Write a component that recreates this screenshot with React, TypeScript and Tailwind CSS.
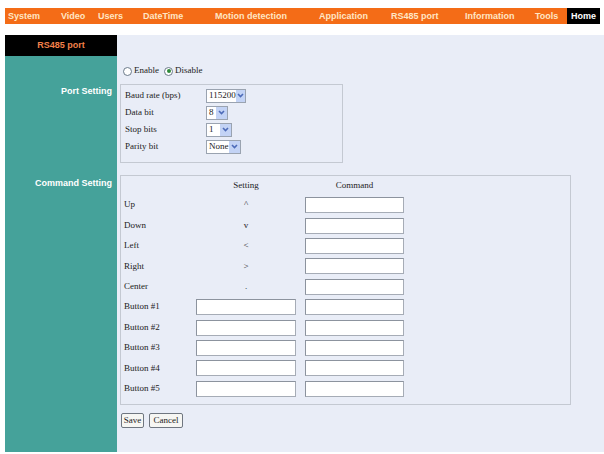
import React from 'react';

const navItems = [
  { label: 'System', w: 'w-[53px]' },
  { label: 'Video', w: 'w-[37px]' },
  { label: 'Users', w: 'w-[45px]' },
  { label: 'DateTime', w: 'w-[72px]' },
  { label: 'Motion detection', w: 'w-[104px]' },
  { label: 'Application', w: 'w-[72px]' },
  { label: 'RS485 port', w: 'w-[74px]' },
  { label: 'Information', w: 'w-[70px]' },
  { label: 'Tools', w: 'w-[35px]' },
];

const Select = ({ value, w }: { value: string; w: string }) => (
  <div className={`flex h-[14px] ${w} items-center border border-[#9aa3b0] bg-white`}>
    <span className="flex-1 pl-[2px] text-[9px] leading-none">{value}</span>
    <span className="flex h-[12px] w-[11px] items-center justify-center bg-[#c3d3f5]">
      <svg width="7" height="5" viewBox="0 0 7 5">
        <path d="M1 1l2.5 2.5L6 1" fill="none" stroke="#4d6bb8" strokeWidth="1.6" />
      </svg>
    </span>
  </div>
);

const Input = () => (
  <div className="h-[16px] w-full border border-[#a6acb6] border-t-[#8c939e] border-l-[#8c939e] bg-white" />
);

const Radio = ({ checked }: { checked?: boolean }) => (
  <span className="inline-flex h-[9px] w-[9px] items-center justify-center rounded-full border border-[#6b7a8a] bg-white">
    {checked && <span className="h-[4px] w-[4px] rounded-full bg-[#2f8a3a]" />}
  </span>
);

const dirs = [
  { label: 'Up', mark: '^' },
  { label: 'Down', mark: 'v' },
  { label: 'Left', mark: '<' },
  { label: 'Right', mark: '>' },
  { label: 'Center', mark: '.' },
];

export default function App() {
  const serif = { fontFamily: '"Liberation Serif", "Times New Roman", serif' };
  return (
    <div className="h-[454px] w-[604px] overflow-hidden bg-white text-[#222]" style={{ fontFamily: '"Liberation Sans", Arial, sans-serif' }}>
      <div className="h-[8px]" />
      {/* top menu */}
      <div className="ml-[5px] mr-[4px] flex h-[16px] items-center bg-[#f46c17]">
        {navItems.map((n) => (
          <div key={n.label} className={`${n.w} pl-[3px] text-[9px] font-bold leading-none whitespace-nowrap text-[#ffe6c4]`}>
            {n.label}
          </div>
        ))}
        <div className="flex h-full flex-1 items-center bg-black pl-[4px] text-[9px] font-bold leading-none text-white">Home</div>
      </div>
      <div className="h-[11px]" />

      <div className="ml-[5px] flex flex-col">
        {/* header row */}
        <div className="flex h-[21px]">
          <div className="flex w-[112px] items-center justify-center bg-black text-[9px] font-bold text-[#f2804a]">RS485 port</div>
          <div className="flex-1 bg-[#e9edf7]" />
        </div>

        {/* enable / disable */}
        <div className="flex h-[28px]">
          <div className="w-[112px] bg-[#45a29a]" />
          <div className="flex flex-1 items-center gap-[2px] bg-[#e9edf7] pl-[6px] pt-[2px] text-[9px]" style={serif}>
            <Radio />
            <span className="mr-[3px]">Enable</span>
            <Radio checked />
            <span>Disable</span>
          </div>
        </div>

        {/* port setting */}
        <div className="flex h-[91px]">
          <div className="w-[112px] bg-[#45a29a] pr-[5px] pt-[1px] text-right text-[9px] font-bold text-white">Port Setting</div>
          <div className="flex-1 bg-[#e9edf7] pl-[3px]">
            <div className="flex h-[79px] w-[223px] flex-col border border-[#c4c9d2] pt-[2px] text-[9px]" style={serif}>
              {[
                ['Baud rate (bps)', '115200', 'w-[40px]'],
                ['Data bit', '8', 'w-[22px]'],
                ['Stop bits', '1', 'w-[26px]'],
                ['Parity bit', 'None', 'w-[35px]'],
              ].map(([l, v, w]) => (
                <div key={l} className="flex h-[17px] items-center">
                  <span className="w-[85px] pl-[4px]">{l}</span>
                  <Select value={v} w={w} />
                </div>
              ))}
            </div>
          </div>
        </div>

        {/* command setting */}
        <div className="flex h-[230px]">
          <div className="w-[112px] bg-[#45a29a] pr-[5px] pt-[2px] text-right text-[9px] font-bold text-white">Command Setting</div>
          <div className="flex-1 bg-[#e9edf7] pl-[3px]">
            <div className="h-[230px] w-[451px] border border-[#c4c9d2] pt-[1px] text-[9px]" style={serif}>
              <div className="flex h-[18px] items-center">
                <span className="w-[75px]" />
                <span className="w-[100px] text-center">Setting</span>
                <span className="w-[9px]" />
                <span className="w-[99px] text-center">Command</span>
              </div>
              {dirs.map((d) => (
                <div key={d.label} className="flex h-[20.4px] items-center">
                  <span className="w-[75px] pl-[3px]">{d.label}</span>
                  <span className="w-[100px] text-center">{d.mark}</span>
                  <span className="w-[9px]" />
                  <span className="w-[99px]"><Input /></span>
                </div>
              ))}
              {[1, 2, 3, 4, 5].map((i) => (
                <div key={i} className="flex h-[20.4px] items-center">
                  <span className="w-[75px] pl-[3px]">Button #{i}</span>
                  <span className="w-[100px]"><Input /></span>
                  <span className="w-[9px]" />
                  <span className="w-[99px]"><Input /></span>
                </div>
              ))}
            </div>
          </div>
        </div>

        {/* buttons */}
        <div className="flex h-[47px]">
          <div className="w-[112px] bg-[#45a29a]" />
          <div className="flex flex-1 items-start gap-[5px] bg-[#e9edf7] pl-[4px] pt-[8px] text-[9px]" style={serif}>
            <button className="h-[15px] w-[23px] rounded-[2px] border border-[#6f7680] bg-[#f6f6f3] leading-none">Save</button>
            <button className="h-[15px] w-[34px] rounded-[2px] border border-[#6f7680] bg-[#f6f6f3] leading-none">Cancel</button>
          </div>
        </div>
      </div>
    </div>
  );
}
